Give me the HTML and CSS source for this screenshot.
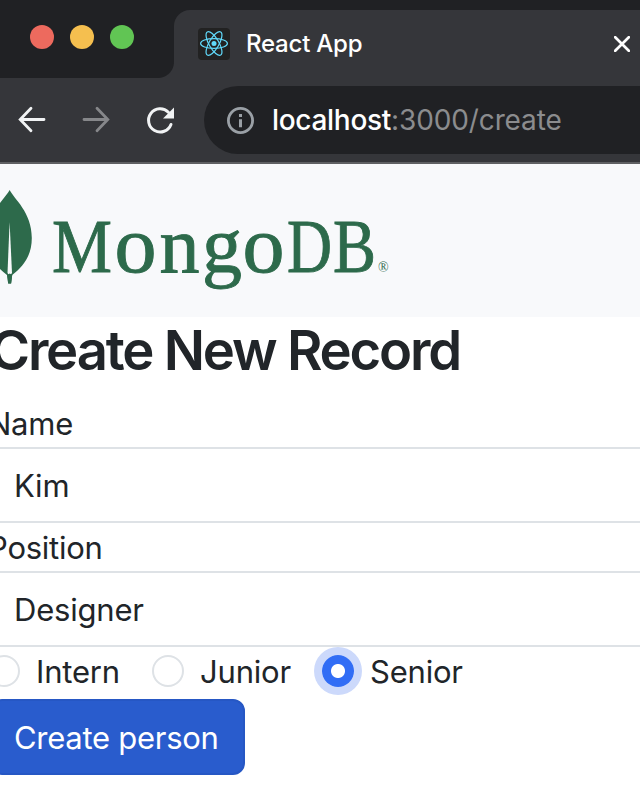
FILE: index.html
```html
<!DOCTYPE html>
<html lang="en">
<head>
<meta charset="utf-8">
<title>React App</title>
<link rel="stylesheet" href="styles.css">
</head>
<body>
<div class="tabstrip">
  <div class="lights"><span class="light red"></span><span class="light yellow"></span><span class="light green"></span></div>
  <div class="tab">
    <svg class="favicon" viewBox="0 0 32 32"><rect width="32" height="32" rx="4" fill="#222"/><g fill="none" stroke="#61dafb" stroke-width="1.2"><ellipse cx="16" cy="15.5" rx="13.4" ry="4.9"/><ellipse cx="16" cy="15.5" rx="13.4" ry="4.9" transform="rotate(60 16 15.5)"/><ellipse cx="16" cy="15.5" rx="13.4" ry="4.9" transform="rotate(120 16 15.5)"/></g><circle cx="16" cy="15.5" r="2.5" fill="#61dafb"/></svg>
    <span class="tab-title">React App</span>
    <svg class="close" viewBox="0 0 16 16"><path d="M1.2 1.2 14.8 14.8M14.8 1.2 1.2 14.8" fill="none" stroke="#fff" stroke-width="2.7" stroke-linecap="round"/></svg>
  </div>
</div>
<div class="toolbar">
  <svg class="nav-icon" viewBox="0 0 32 32"><path d="M28 15.500H4.500M15 4.300 4.200 15.500 15 26.700" fill="none" stroke="#f1f3f4" stroke-width="2.8" stroke-linecap="round"/></svg>
  <svg class="nav-icon" viewBox="0 0 32 32"><path d="M4 15.500H27.500M17 4.300 27.800 15.500 17 26.700" fill="none" stroke="#86878a" stroke-width="2.8" stroke-linecap="round"/></svg>
  <svg class="nav-icon" viewBox="0 0 32 32"><path d="M27 20.500A11.600 11.600 0 1 1 24.400 8.200" fill="none" stroke="#f1f3f4" stroke-width="3" stroke-linecap="round"/><path d="M30 3.500V14.500H19Z" fill="#f1f3f4"/></svg>
  <div class="address">
    <svg class="info" viewBox="0 0 28 28"><circle cx="14.500" cy="14.500" r="12.100" fill="none" stroke="#9aa0a6" stroke-width="2.800"/><path d="M13 8h3v3h-3zM13 13.200h3v8h-3z" fill="#9aa0a6"/></svg>
    <span class="url"><span class="host">localhost</span>:3000/create</span>
  </div>
</div>
<header class="brand">
  <svg class="logo" viewBox="0 0 400 153" width="400" height="153">
    <path d="M9.7 26C14 35 31.800 48 31.800 74C31.800 91 24 102 12.200 111L11 119.500H8.200L7 111C-5 102-12.500 91-12.500 74C-12.500 48 5 35 9.700 26Z" fill="#2d6a4b"/>
    <path d="M9.600 58 12 109Q9.600 113 7.500 109Z" fill="#f8f9fb"/>
    <path d="M7.200 111 9.700 109.500 12.200 111 11.200 119.500H8.200Z" fill="#2d6a4b"/>
    <text class="wordmark" y="107.500"><tspan x="52" textLength="60" lengthAdjust="spacingAndGlyphs">M</tspan><tspan class="lower" x="114.500" textLength="42" lengthAdjust="spacingAndGlyphs">o</tspan><tspan class="lower" x="159.500" textLength="40" lengthAdjust="spacingAndGlyphs">n</tspan><tspan class="lower" x="202" textLength="40" lengthAdjust="spacingAndGlyphs">g</tspan><tspan class="lower" x="242.500" textLength="42" lengthAdjust="spacingAndGlyphs">o</tspan><tspan x="287" textLength="45" lengthAdjust="spacingAndGlyphs">D</tspan><tspan x="333" textLength="43" lengthAdjust="spacingAndGlyphs">B</tspan><tspan class="mark" x="378">®</tspan></text>
  </svg>
</header>
<main class="page">
  <h1>Create New Record</h1>
  <label class="label name">Name</label>
  <div class="field">Kim</div>
  <label class="label position">Position</label>
  <div class="field designer">Designer</div>
  <div class="options">
    <span class="choice"><span class="radio"></span>Intern</span>
    <span class="choice"><span class="radio"></span>Junior</span>
    <span class="choice"><span class="radio checked"></span>Senior</span>
  </div>
  <div class="button"><span>Create person</span></div>
</main>
</body>
</html>
```
FILE: styles.css
```css
* { box-sizing: border-box; }
body { margin: 0; width: 640px; height: 800px; overflow: hidden; background: #fff; color: #212529; font-family: Inter, "Liberation Sans", sans-serif; }
svg { display: block; flex: none; }
.tabstrip { display: flex; height: 78px; background: #202124; }
.lights { display: flex; gap: 16px; width: 174px; padding: 25px 0 0 30px; background: radial-gradient(circle at 0 0, #202124 15.5px, #35363a 16.5px) 158px 62px / 16px 16px no-repeat; }
.light { width: 24px; height: 24px; border-radius: 50%; }
.red { background: #ed6a5e; }
.yellow { background: #f5bf4f; }
.green { background: #61c554; }
.tab { display: flex; align-items: center; flex: 1; height: 68px; margin-top: 10px; padding: 0 10px 0 24px; border-radius: 16px 0 0; background: #35363a; }
.favicon { width: 32px; height: 32px; }
.tab-title { flex: 1; margin-left: 16px; color: #fff; font-size: 24px; font-weight: 500; letter-spacing: -.22px; line-height: 32px; }
.close { width: 16px; height: 16px; }
.toolbar { display: flex; align-items: center; height: 86px; padding-left: 16px; gap: 32px; background: #35363a; border-bottom: 2px solid #5f6063; }
.nav-icon { width: 32px; height: 32px; }
.address { display: flex; align-items: center; flex: 1; height: 68px; margin-left: -4px; padding-left: 22px; border-radius: 34px 0 0 34px; background: #202124; }
.info { width: 28px; height: 28px; }
.url { margin-left: 18px; color: #8b8c8e; font-size: 28px; letter-spacing: -.12px; white-space: nowrap; }
.host { color: #fff; font-weight: 500; letter-spacing: -.3px; }
.brand { height: 153px; background: #f8f9fb; }
.wordmark { font-family: "Liberation Serif", serif; font-size: 76px; fill: #2d6a4b; stroke: #2d6a4b; stroke-width: .9; }
.lower { font-size: 80px; }
.mark { font-size: 14px; stroke: none; }
.page { margin-left: -10px; }
h1 { margin: 0; height: 83px; font-size: 54.400px; font-weight: 600; letter-spacing: -2.18px; line-height: 67px; white-space: nowrap; }
.label { display: block; height: 47px; font-size: 31px; letter-spacing: -.25px; line-height: 48px; text-indent: -2px; }
.position { height: 48px; line-height: 50px; }
.field { height: 76px; padding-left: 24px; border-top: 2px solid #dee2e6; border-bottom: 2px solid #dee2e6; font-size: 31px; letter-spacing: -.2px; line-height: 74px; }
.options { display: grid; grid-template-columns: 164px 170px 1fr; height: 52px; font-size: 31px; letter-spacing: -.2px; }
.choice { display: flex; align-items: center; gap: 16px; height: 48px; margin-left: -2px; white-space: nowrap; }
.radio { flex: none; width: 32px; height: 32px; border: 2px solid #dee2e6; border-radius: 50%; }
.radio.checked { border: 0; background: radial-gradient(circle, #fff 6.500px, #316df5 7.500px); box-shadow: 0 0 0 8px #ccd9fb; }
.button { display: flex; align-items: center; width: 255px; height: 76px; padding-left: 22px; border: 2px solid #2657c4; border-radius: 12px; background: #295ccd; color: #fff; font-size: 31px; letter-spacing: -.28px; white-space: nowrap; }
```
